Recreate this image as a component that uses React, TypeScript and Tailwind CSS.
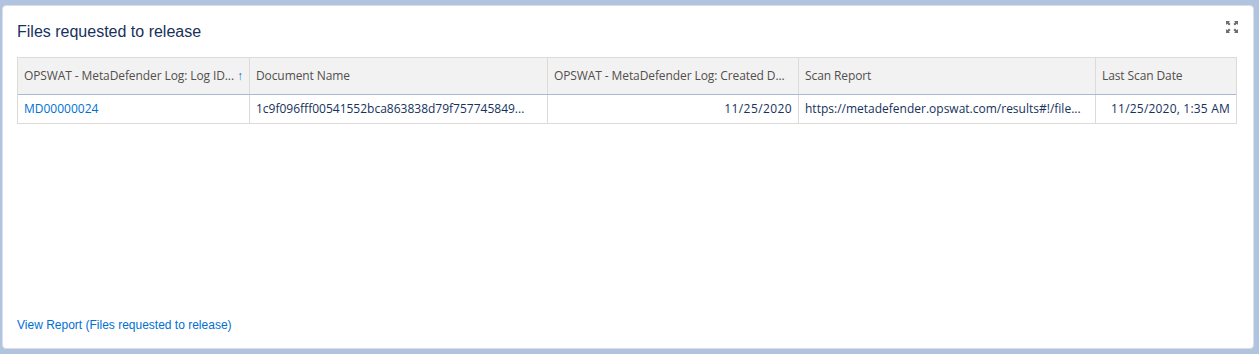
import React from 'react';

const cols = [
    { label: 'OPSWAT - MetaDefender Log: Log ID...', w: 'w-[231px]', sort: true },
    { label: 'Document Name', w: 'w-[298px]' },
    { label: 'OPSWAT - MetaDefender Log: Created D...', w: 'w-[251px]' },
    { label: 'Scan Report', w: 'w-[297px]' },
    { label: 'Last Scan Date', w: 'flex-1' },
];

export default function App() {
    return (
        <div className="w-[1259px] h-[354px] bg-[#b0c4df] pt-[5px] pl-[2px] pr-[5px] pb-[5px]">
            <div className="relative h-full bg-white rounded-[4px] border border-[#d8dde6] flex flex-col pl-[14px] pr-[16px]">
                {/* Header */}
                <div className="pt-[14px] h-[51px] text-[16px] text-[#16325c] font-['Liberation_Sans',Arial,sans-serif]">
                    Files requested to release
                </div>
                <button className="absolute right-[15px] top-[15px] w-[12px] h-[12px] text-[#706e6b]">
                    <ExpandIcon />
                </button>

                {/* Table */}
                <div className="border border-[#dddbda] font-['Open_Sans',sans-serif] text-[12px]">
                    <div className="flex h-[37px] bg-[#f3f2f2] text-[#514f4d] border-b border-[#a9bad6]">
                        {cols.map((c, i) => (
                            <div
                                key={c.label}
                                className={`${c.w} flex items-center px-[6px] ${i > 0 ? 'border-l border-[#dddbda]' : ''}`}
                            >
                                <span className="tracking-[-0.1px] whitespace-nowrap">{c.label}</span>
                                {c.sort && <span className="ml-auto text-[#0070d2] text-[12px] font-bold">↑</span>}
                            </div>
                        ))}
                    </div>
                    <div className="flex h-[28px] text-[#16325c]">
                        <div className="w-[231px] flex items-center px-[6px] text-[#0070d2]">MD00000024</div>
                        <div className="w-[298px] flex items-center px-[6px] border-l border-[#dddbda] whitespace-nowrap">
                            1c9f096fff00541552bca863838d79f757745849...
                        </div>
                        <div className="w-[251px] flex items-center justify-end px-[6px] border-l border-[#dddbda] tracking-[0.4px]">
                            11/25/2020
                        </div>
                        <div className="w-[297px] flex items-center px-[6px] border-l border-[#dddbda] whitespace-nowrap">
                            https://metadefender.opswat.com/results#!/file...
                        </div>
                        <div className="flex-1 flex items-center justify-end px-[6px] border-l border-[#dddbda] whitespace-nowrap tracking-[0.2px]">
                            11/25/2020, 1:35 AM
                        </div>
                    </div>
                </div>

                <div className="flex-1" />

                <div className="pb-[14px] text-[12px] text-[#0070d2] font-['Liberation_Sans',Arial,sans-serif]">
                    View Report (Files requested to release)
                </div>
            </div>
        </div>
    );
}

function ExpandIcon() {
    return (
        <svg viewBox="0 0 12 12" width="12" height="12" fill="currentColor">
            <path d="M0 0h4L2.8 1.2 4.6 3 3 4.6 1.2 2.8 0 4z" />
            <path d="M12 0v4l-1.2-1.2L9 4.6 7.4 3l1.8-1.8L8 0z" />
            <path d="M0 12V8l1.2 1.2L3 7.4 4.6 9l-1.8 1.8L4 12z" />
            <path d="M12 12H8l1.2-1.2L7.4 9 9 7.4l1.8 1.8L12 8z" />
        </svg>
    );
}
